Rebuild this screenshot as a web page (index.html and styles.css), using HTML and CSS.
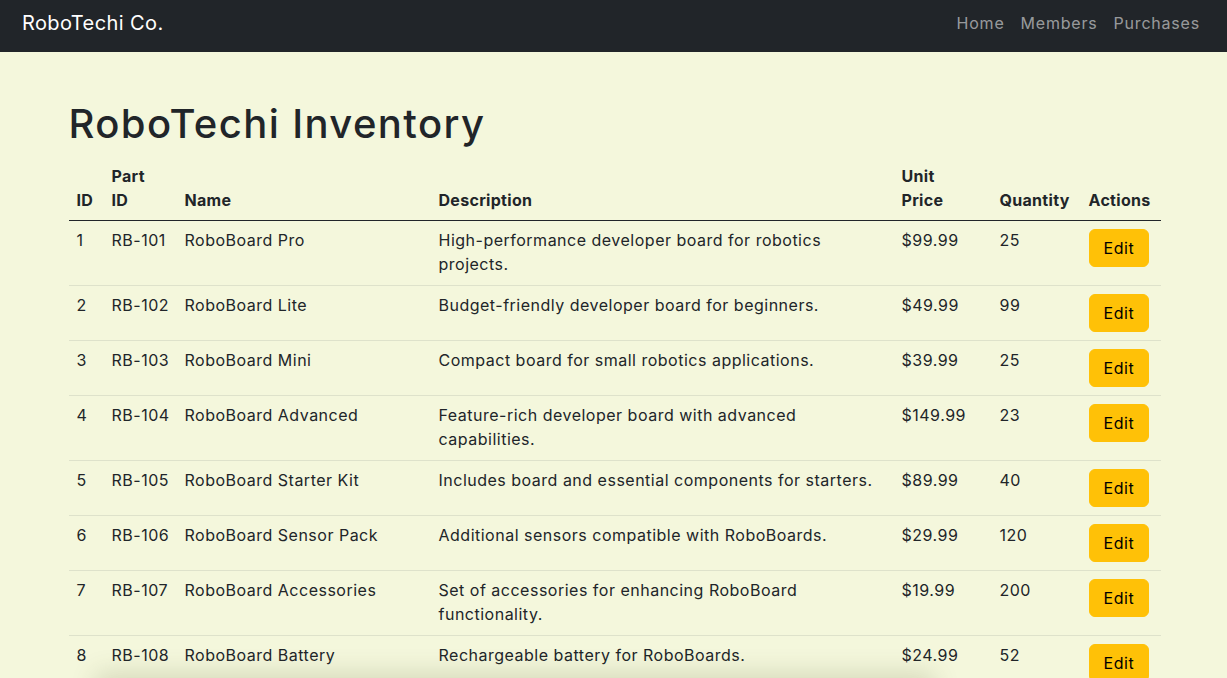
FILE: index.html
```html
<!DOCTYPE html>
<html lang="en">
<head>
<meta charset="utf-8">
<title>RoboTechi Inventory</title>
<link rel="stylesheet" href="styles.css">
</head>
<body>
<nav class="navbar">
  <a class="brand" href="#">RoboTechi Co.</a>
  <ul class="nav-links">
    <li><a href="#">Home</a></li>
    <li><a href="#">Members</a></li>
    <li><a href="#">Purchases</a></li>
  </ul>
</nav>
<main class="container">
  <h1 class="title">RoboTechi Inventory</h1>
  <table class="inventory">
    <colgroup>
      <col class="c-id"><col class="c-part"><col class="c-name"><col class="c-desc"><col class="c-price"><col class="c-qty"><col class="c-act">
    </colgroup>
    <thead>
      <tr><th>ID</th><th>Part<br>ID</th><th>Name</th><th>Description</th><th>Unit<br>Price</th><th>Quantity</th><th>Actions</th></tr>
    </thead>
    <tbody>
      <tr><td>1</td><td class="nowrap">RB-101</td><td>RoboBoard Pro</td><td>High-performance developer board for robotics projects.</td><td>$99.99</td><td>25</td><td><button class="btn-edit">Edit</button></td></tr>
      <tr><td>2</td><td class="nowrap">RB-102</td><td>RoboBoard Lite</td><td>Budget-friendly developer board for beginners.</td><td>$49.99</td><td>99</td><td><button class="btn-edit">Edit</button></td></tr>
      <tr><td>3</td><td class="nowrap">RB-103</td><td>RoboBoard Mini</td><td>Compact board for small robotics applications.</td><td>$39.99</td><td>25</td><td><button class="btn-edit">Edit</button></td></tr>
      <tr><td>4</td><td class="nowrap">RB-104</td><td>RoboBoard Advanced</td><td>Feature-rich developer board with advanced capabilities.</td><td>$149.99</td><td>23</td><td><button class="btn-edit">Edit</button></td></tr>
      <tr><td>5</td><td class="nowrap">RB-105</td><td>RoboBoard Starter Kit</td><td>Includes board and essential components for starters.</td><td>$89.99</td><td>40</td><td><button class="btn-edit">Edit</button></td></tr>
      <tr><td>6</td><td class="nowrap">RB-106</td><td>RoboBoard Sensor Pack</td><td>Additional sensors compatible with RoboBoards.</td><td>$29.99</td><td>120</td><td><button class="btn-edit">Edit</button></td></tr>
      <tr><td>7</td><td class="nowrap">RB-107</td><td>RoboBoard Accessories</td><td>Set of accessories for enhancing RoboBoard functionality.</td><td>$19.99</td><td>200</td><td><button class="btn-edit">Edit</button></td></tr>
      <tr><td>8</td><td class="nowrap">RB-108</td><td>RoboBoard Battery</td><td>Rechargeable battery for RoboBoards.</td><td>$24.99</td><td>52</td><td><button class="btn-edit">Edit</button></td></tr>
      <tr><td>9</td><td class="nowrap">RB-109</td><td>RoboBoard Case</td><td>Protective case for RoboBoards.</td><td>$14.99</td><td>75</td><td><button class="btn-edit">Edit</button></td></tr>
    </tbody>
  </table>
</main>
<div class="bottom-shadow"></div>
</body>
</html>
```

FILE: styles.css
```css
* { box-sizing: border-box; }
html, body { margin: 0; padding: 0; }
body {
  background: #f4f7dc;
  color: #212529;
  font-family: "Inter", "Liberation Sans", sans-serif;
  font-size: 16px;
  line-height: 24px;
  letter-spacing: 0.5px;
}
.navbar {
  height: 52px;
  background: #212529;
  display: flex;
  align-items: center;
  justify-content: space-between;
  padding: 0 19px 6px 22px;
}
.brand {
  color: #fff;
  text-decoration: none;
  font-size: 20px;
  line-height: 30px;
  letter-spacing: 0.4px;
}
.nav-links {
  list-style: none;
  margin: 0;
  padding: 0;
  display: flex;
}
.nav-links a {
  display: block;
  padding: 8px 8px;
  color: rgba(255,255,255,0.55);
  text-decoration: none;
  font-size: 16px;
  letter-spacing: 0.8px;
}
.container {
  width: 1092px;
  margin: 0 auto;
  padding-top: 48px;
}
.title {
  margin: 0 0 8px 1px;
  font-size: 40px;
  line-height: 48px;
  font-weight: 500;
  letter-spacing: 1.4px;
}
.inventory {
  width: 1092px;
  table-layout: fixed;
  border-collapse: collapse;
  margin-left: 1px;
}
.c-id { width: 35px; }
.c-part { width: 73px; }
.c-name { width: 254px; }
.c-desc { width: 463px; }
.c-price { width: 98px; }
.c-qty { width: 89px; }
.c-act { width: 80px; }
.inventory th {
  text-align: left;
  vertical-align: bottom;
  font-weight: 700;
  padding: 8px 8px;
  border-bottom: 1px solid #212529;
  letter-spacing: 0.3px;
}
.inventory td {
  vertical-align: top;
  padding: 7px 8px 9px;
  border-bottom: 1px solid #dee2cb;
}
.inventory td:last-child {
  padding-top: 8px;
  padding-bottom: 8px;
}
.nowrap { white-space: nowrap; }
.btn-edit {
  background: #ffc107;
  border: 1px solid #ffc107;
  border-radius: 6px;
  color: #000;
  font-family: inherit;
  font-size: 16px;
  line-height: 24px;
  letter-spacing: 0.6px;
  padding: 6px 14px;
  height: 38px;
  cursor: pointer;
}
.bottom-shadow {
  position: fixed;
  left: 100px;
  width: 830px;
  top: 100%;
  height: 40px;
  box-shadow: 0 0 26px 4px rgba(80, 90, 40, 0.2);
}
```
